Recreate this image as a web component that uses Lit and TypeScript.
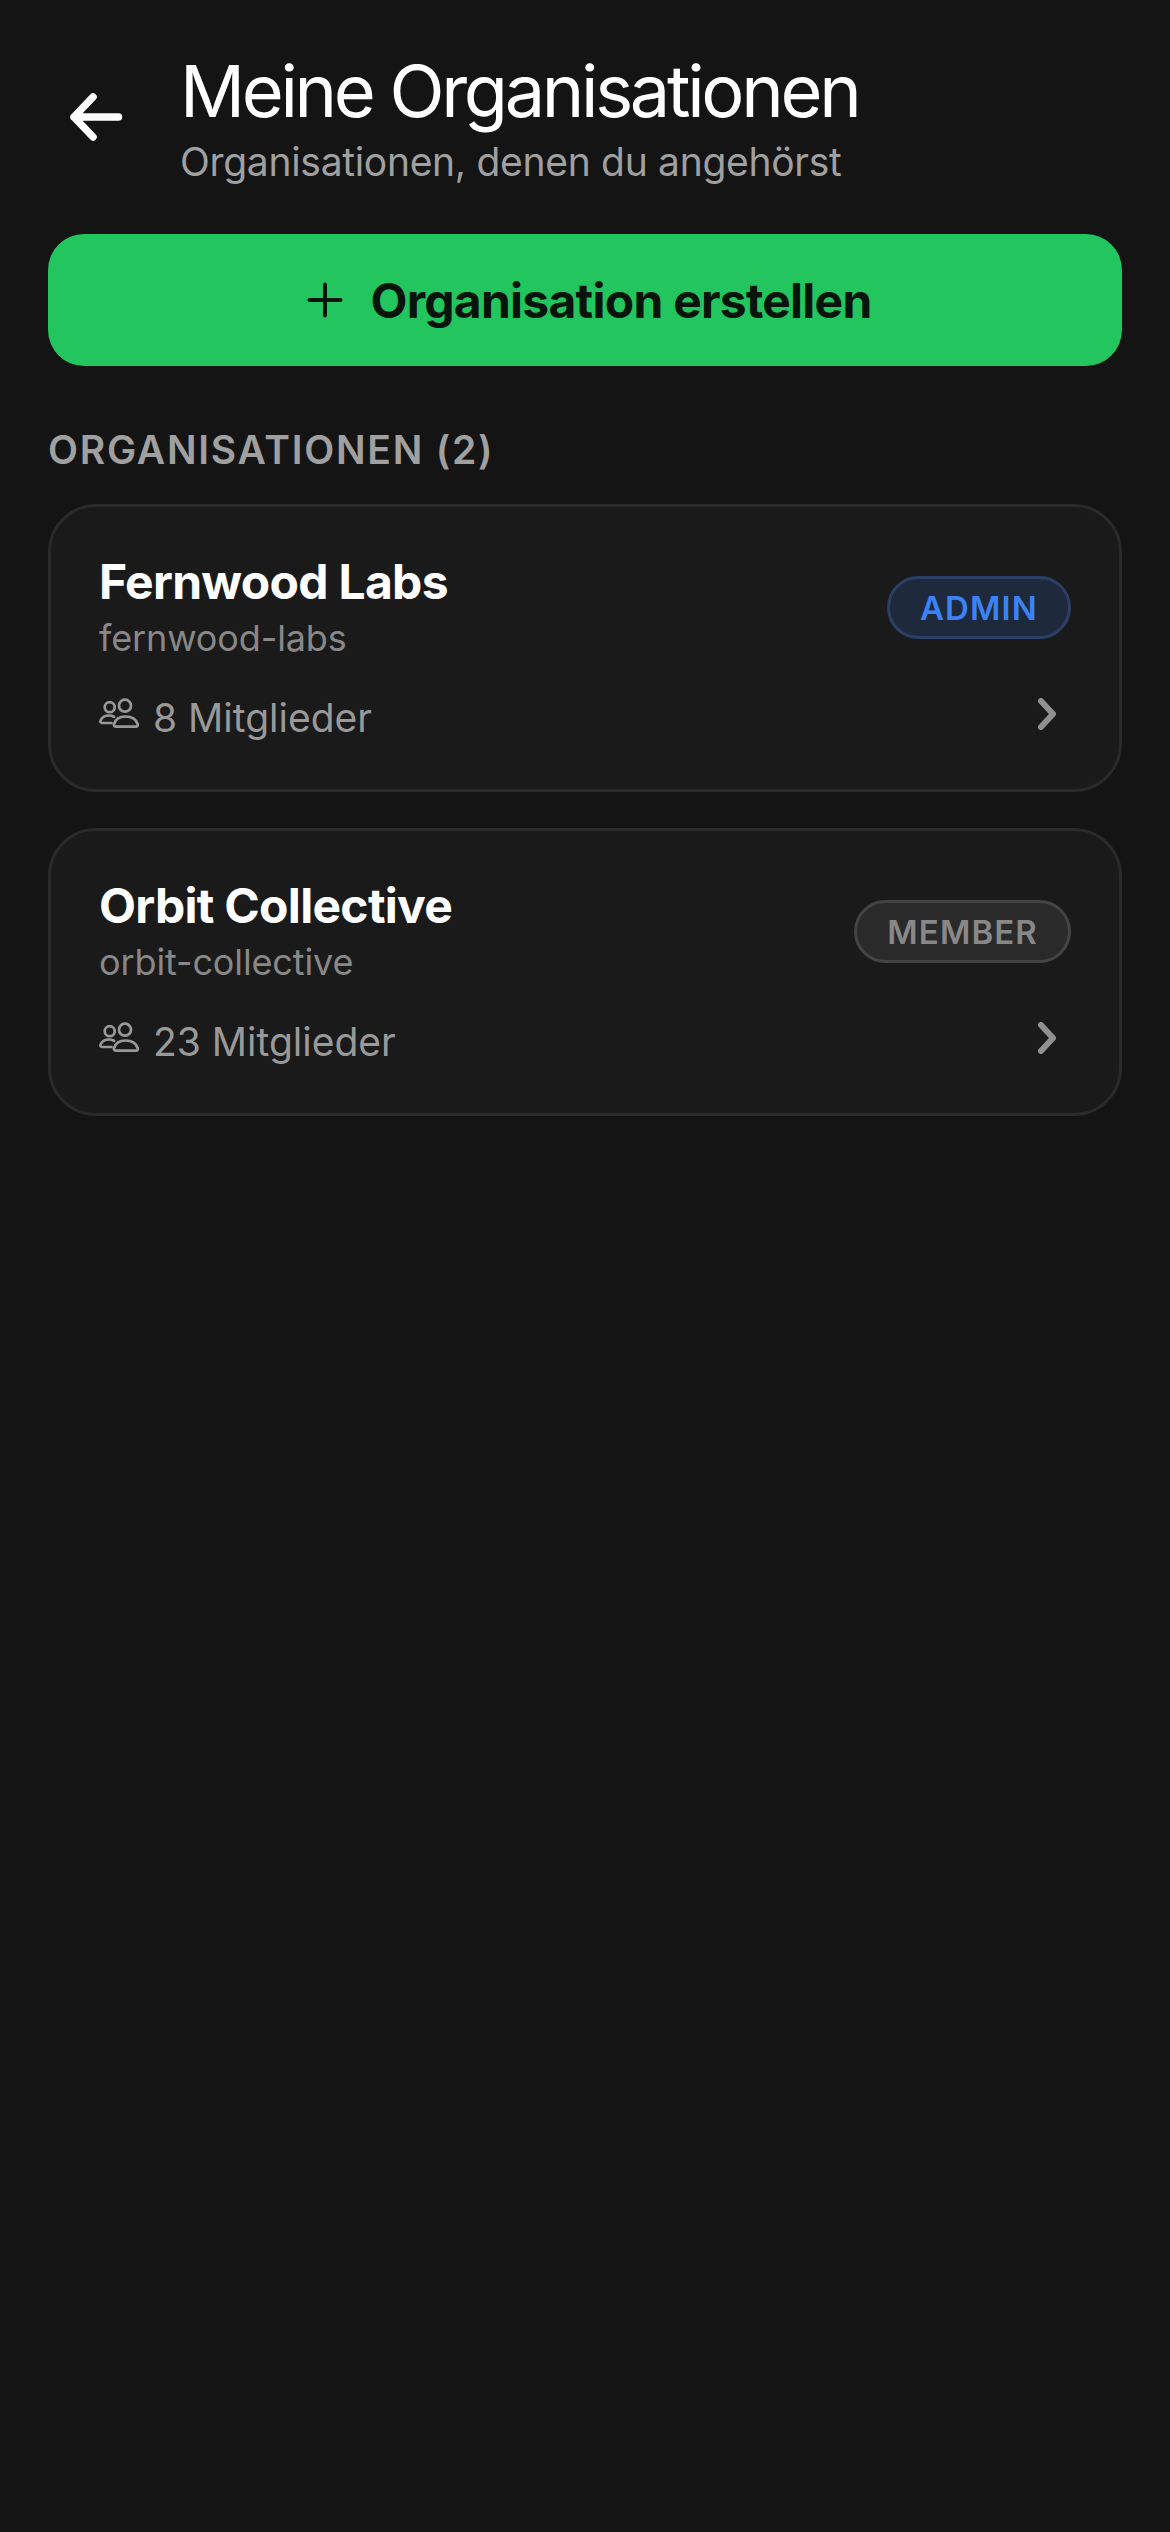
import { LitElement, html, css, svg } from "lit";
import { customElement } from "lit/decorators.js";

const orgs = [
  { name: "Fernwood Labs", slug: "fernwood-labs", members: "8 Mitglieder", role: "ADMIN", cls: "admin" },
  { name: "Orbit Collective", slug: "orbit-collective", members: "23 Mitglieder", role: "MEMBER", cls: "member" },
];

@customElement("app-root")
export class AppRoot extends LitElement {
  static styles = css`
    :host { display: block; width: 1170px; height: 2532px; background: #141414; font-family: Inter, "Liberation Sans", sans-serif; overflow: hidden; }
    .page { display: flex; flex-direction: column; padding: 0 48px; }
    .header { display: flex; align-items: flex-start; height: 234px; padding-top: 49px; box-sizing: border-box; }
    .back { width: 96px; height: 96px; margin-top: 20px; margin-right: 36px; display: flex; align-items: center; justify-content: center; flex: none; }
    .titles { display: flex; flex-direction: column; }
    .title { font-size: 72px; line-height: 84px; font-weight: 400; letter-spacing: -3.3px; color: #fff; }
    .sub { font-size: 39px; line-height: 54px; color: #a0a0a0; margin-top: 2px; letter-spacing: -0.3px; }
    .btn { height: 132px; border-radius: 36px; background: #22c55e; display: flex; align-items: center; justify-content: center; gap: 18px; color: #06140c; font-size: 48px; font-weight: 650; letter-spacing: -0.75px; }
    .section { margin-top: 60px; font-size: 39px; line-height: 48px; font-weight: 600; letter-spacing: 1.75px; color: #a0a0a0; }
    .list { display: flex; flex-direction: column; gap: 36px; margin-top: 30px; }
    .card { height: 288px; box-sizing: border-box; border: 3px solid #2a2a2a; border-radius: 48px; background: #1a1a1a; padding: 48px 48px 45px; display: flex; flex-direction: column; }
    .top, .bottom { display: flex; justify-content: space-between; align-items: flex-start; }
    .bottom { margin-top: 32px; }
    .name { font-size: 48px; line-height: 54px; font-weight: 650; color: #fff; letter-spacing: -0.7px; }
    .slug { font-size: 36px; line-height: 48px; color: #888; margin-top: 5px; letter-spacing: -0.12px; }
    .members { display: flex; align-items: flex-start; gap: 14px; font-size: 39px; line-height: 48px; color: #999; }
    .members svg { margin-top: 4px; }
    .badge { box-sizing: border-box; height: 63px; margin-top: 21px; padding: 0 30px; border-radius: 32px; border: 3px solid; display: flex; align-items: center; font-size: 33px; font-weight: 600; letter-spacing: 1.1px; }
    .admin { background: #1e293b; border-color: #2a4068; color: #3b82f6; }
    .member { background: #2a2a2a; border-color: #444; color: #888; }
    .chev { margin-top: 4px; margin-right: 15px; }
    svg { display: block; flex: none; }
  `;

  private peopleIcon() {
    return svg`<svg width="40" height="30" viewBox="0 0 40 30" fill="none" stroke="#999" stroke-width="2.7" stroke-linecap="round" stroke-linejoin="round">
      <circle cx="10.7" cy="9.2" r="5"/><circle cx="26" cy="7.7" r="6"/>
      <path d="M12.5 25H3C1.5 25 1 23.8 1.6 22.5C3 19 6.5 17.5 10 17.5C12 17.5 13.5 18 15 18.8"/>
      <path d="M17 28.7H37C38.5 28.7 39.2 27.5 38.7 26C37 21 32 18.5 26.5 18.5C21 18.5 16.5 21 15 26C14.5 27.5 15.5 28.7 17 28.7Z"/>
    </svg>`;
  }

  render() {
    return html`<div class="page">
      <div class="header">
        <div class="back">
          <svg width="54" height="48" viewBox="0 0 54 48" fill="none" stroke="#fff" stroke-width="7.5" stroke-linecap="round" stroke-linejoin="round"><path d="M49.5 24H5M24 4L5 24L24 44"/></svg>
        </div>
        <div class="titles">
          <div class="title">Meine Organisationen</div>
          <div class="sub">Organisationen, denen du angehörst</div>
        </div>
      </div>
      <div class="btn">
        <svg width="54" height="54" viewBox="0 0 54 54" fill="none" stroke="#06140c" stroke-width="4" stroke-linecap="round"><path d="M27 11.5V42.5M11.5 27H42.5"/></svg>
        <span>Organisation erstellen</span>
      </div>
      <div class="section">ORGANISATIONEN (2)</div>
      <div class="list">
        ${orgs.map((o) => html`<div class="card">
          <div class="top">
            <div>
              <div class="name">${o.name}</div>
              <div class="slug">${o.slug}</div>
            </div>
            <div class="badge ${o.cls}">${o.role}</div>
          </div>
          <div class="bottom">
            <div class="members">${this.peopleIcon()}<span>${o.members}</span></div>
            <svg class="chev" width="18" height="32" viewBox="0 0 18 32" fill="none" stroke="#909090" stroke-width="6" stroke-linecap="round" stroke-linejoin="round"><path d="M3 3L15 16L3 29"/></svg>
          </div>
        </div>`)}
      </div>
    </div>`;
  }
}
